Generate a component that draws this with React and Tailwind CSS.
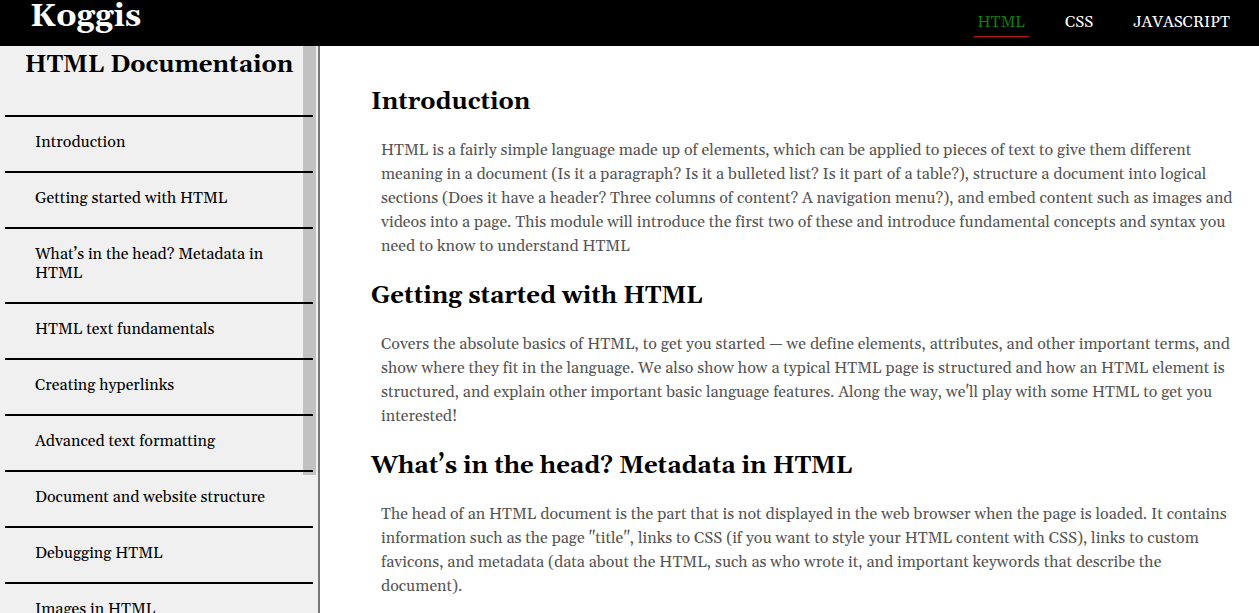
const languages = ["HTML", "CSS", "JAVASCRIPT"];

const topics = [
  "Introduction",
  "Getting started with HTML",
  "What’s in the head? Metadata in HTML",
  "HTML text fundamentals",
  "Creating hyperlinks",
  "Advanced text formatting",
  "Document and website structure",
  "Debugging HTML",
  "Images in HTML",
];

const sections = [
  {
    title: "Introduction",
    body: "HTML is a fairly simple language made up of elements, which can be applied to pieces of text to give them different meaning in a document (Is it a paragraph? Is it a bulleted list? Is it part of a table?), structure a document into logical sections (Does it have a header? Three columns of content? A navigation menu?), and embed content such as images and videos into a page. This module will introduce the first two of these and introduce fundamental concepts and syntax you need to know to understand HTML",
  },
  {
    title: "Getting started with HTML",
    body: "Covers the absolute basics of HTML, to get you started — we define elements, attributes, and other important terms, and show where they fit in the language. We also show how a typical HTML page is structured and how an HTML element is structured, and explain other important basic language features. Along the way, we'll play with some HTML to get you interested!",
  },
  {
    title: "What’s in the head? Metadata in HTML",
    body: 'The head of an HTML document is the part that is not displayed in the web browser when the page is loaded. It contains information such as the page "title", links to CSS (if you want to style your HTML content with CSS), links to custom favicons, and metadata (data about the HTML, such as who wrote it, and important keywords that describe the document).',
  },
];

const slug = (text) => text.toLowerCase().replace(/[^a-z]+/g, "-");

function Header() {
  return (
    <header className="flex h-[46px] shrink-0 justify-between bg-black pr-[25px] pl-[30px] text-white">
      <a href="#top" className="text-[32px] leading-[34px] font-bold">
        Koggis
      </a>
      <nav className="flex items-start gap-8 pt-2">
        {languages.map((name, i) => (
          <a
            key={name}
            href={"#" + name.toLowerCase()}
            className={
              i === 0
                ? "border-b border-[#c01818] px-1 text-base leading-7 text-[#127a12]"
                : "px-1 text-base leading-7"
            }
          >
            {name}
          </a>
        ))}
      </nav>
    </header>
  );
}

function Sidebar() {
  return (
    <aside className="relative w-80 shrink-0 overflow-hidden border-r-2 border-[#777] bg-[#f0f0f0] px-[5px]">
      <div className="absolute top-0 right-[2px] h-[429px] w-[13px] bg-[#c1c1c1]" />
      <div className="relative">
        <h1 className="h-[69px] pt-[5px] text-center text-2xl leading-7 font-bold whitespace-nowrap">
          HTML Documentaion
        </h1>
        <ul className="border-t-2 border-black">
          {topics.map((topic) => (
            <li key={topic} className="border-b-2 border-black">
              <a
                href={"#" + slug(topic)}
                className="block pt-4 pr-10 pb-[19px] pl-[30px] text-base leading-[19px]"
              >
                {topic}
              </a>
            </li>
          ))}
        </ul>
      </div>
    </aside>
  );
}

export default function App() {
  return (
    <div
      id="top"
      className="flex h-screen flex-col overflow-hidden bg-white font-['Georgia','Gelasio','Liberation_Serif',serif] text-black [font-variant-ligatures:none]"
    >
      <Header />
      <div className="flex min-h-0 flex-1">
        <Sidebar />
        <main className="min-w-0 flex-1 overflow-hidden pt-[42px] pr-5 pl-[51px]">
          {sections.map(({ title, body }) => (
            <section key={title} id={slug(title)} className="mb-6">
              <h2 className="mb-[22px] text-2xl leading-7 font-bold">{title}</h2>
              <p className="pl-[10px] text-base leading-6 text-[#555]">{body}</p>
            </section>
          ))}
        </main>
      </div>
    </div>
  );
}
